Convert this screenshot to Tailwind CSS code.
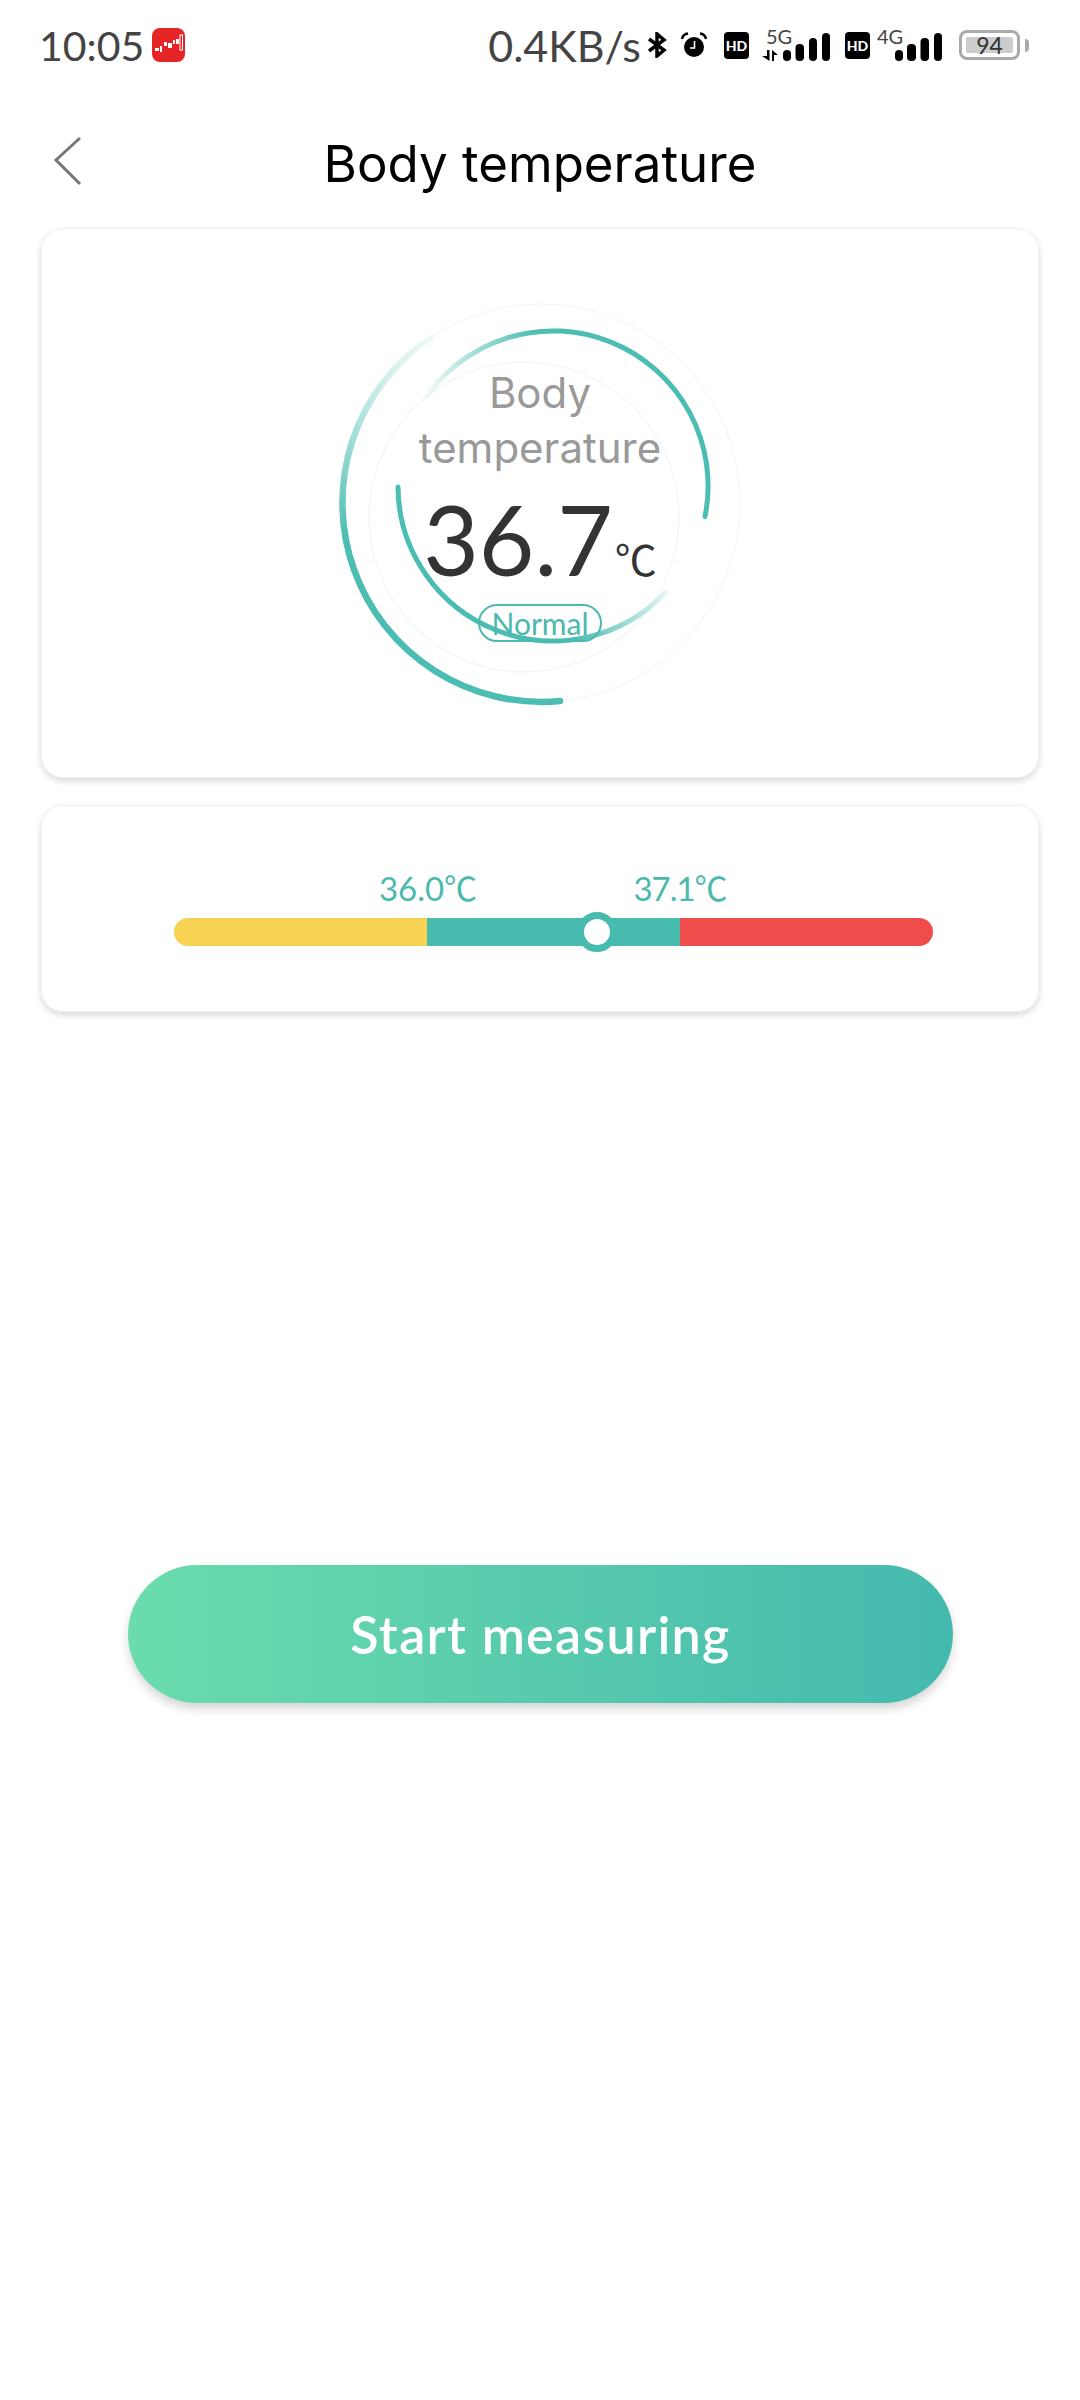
<!DOCTYPE html>
<html lang="en">
<head>
  <meta charset="UTF-8" />
  <meta name="viewport" content="width=device-width, initial-scale=1" />
  <title>Body temperature</title>
  <script src="https://cdn.jsdelivr.net/npm/@tailwindcss/browser@4"></script>
</head>
<body class="bg-white font-['Lato','Noto_Sans_CJK_SC',sans-serif]">
<div class="w-[1080px] h-[2400px] overflow-hidden">

  <!-- status bar -->
  <div class="h-[90px] flex items-center justify-between pl-[39px] pr-[51px] text-[#444]">
    <div class="flex items-center">
      <span class="text-[41px] leading-none w-[113px]">10:05</span>
      <svg class="w-[33px] h-[34px]" viewBox="0 0 33 34">
        <rect width="33" height="34" rx="8" fill="#e52525"/>
        <g fill="#fff">
          <rect x="3" y="20" width="4" height="3"/><rect x="8" y="18" width="2" height="6"/>
          <rect x="12" y="14" width="3" height="4"/><rect x="16" y="15" width="4" height="5"/>
          <rect x="21" y="12" width="2" height="4"/><rect x="24" y="11" width="3" height="5"/>
        </g>
        <rect x="28" y="7" width="2.500" height="15" fill="none" stroke="#fff" stroke-width="1"/>
      </svg>
    </div>
    <div class="flex items-center">
      <span class="text-[43px] leading-none">0.4KB/s</span>
      <svg class="ml-[6px] w-[20px] h-[26px]" viewBox="0 0 20 26" fill="none" stroke="#000" stroke-width="3.500">
        <path d="M2 7 L17 18 L10 24 V2 L17 8 L2 19"/>
      </svg>
      <svg class="ml-[14px] w-[26px] h-[26px]" viewBox="0 0 26 26">
        <circle cx="13" cy="15" r="10" fill="#000"/>
        <path d="M13.500 9v7H9" fill="none" stroke="#fff" stroke-width="1.600"/>
        <path d="M1 7Q2 2 7 1.500M25 7Q24 2 19 1.500" fill="none" stroke="#000" stroke-width="2.500"/>
      </svg>
      <div class="ml-[17px] w-[25px] h-[27px] rounded-[4px] bg-black text-white text-[14px] font-black leading-[27px] text-center">HD</div>
      <div class="ml-[13px] relative w-[68px] h-[34px]">
        <span class="absolute left-[4px] top-[-2px] text-[20px] leading-[20px]">5G</span>
        <svg class="absolute left-0 bottom-0 w-[68px] h-[34px]" viewBox="0 0 68 34">
          <path d="M5 22h2.500v11L0 28h5zM10 22l6 5h-4v6h-2z" fill="#000"/>
          <rect x="21" y="22" width="8" height="11" rx="4"/>
          <rect x="33.500" y="16" width="8.500" height="17" rx="4"/>
          <rect x="47" y="10" width="8" height="23" rx="4"/>
          <rect x="60" y="5" width="8" height="28" rx="4"/>
        </svg>
      </div>
      <div class="ml-[15px] w-[25px] h-[27px] rounded-[4px] bg-black text-white text-[14px] font-black leading-[27px] text-center">HD</div>
      <div class="ml-[7px] relative w-[65px] h-[34px]">
        <span class="absolute left-0 top-[-2px] text-[20px] leading-[20px]">4G</span>
        <svg class="absolute left-0 bottom-0 w-[65px] h-[34px]" viewBox="0 0 65 34">
          <rect x="18" y="22" width="8" height="11" rx="4"/>
          <rect x="30" y="16" width="9" height="17" rx="4"/>
          <rect x="43.500" y="10" width="8.500" height="23" rx="4"/>
          <rect x="57" y="5" width="8" height="28" rx="4"/>
        </svg>
      </div>
      <div class="ml-[17px] w-[61px] h-[30px] border-[3px] border-[#aaa] rounded-[8px] p-[4px]">
        <div class="h-full w-[47px] bg-[#ccc] rounded-[2px] text-[23px] leading-[16px] text-center text-[#333]">94</div>
      </div>
      <div class="ml-[5px] w-[4px] h-[13px] bg-[#aaa] rounded-r-full"></div>
    </div>
  </div>

  <!-- header -->
  <div class="relative h-[138px] pt-[8px] flex items-center justify-center">
    <svg class="absolute left-[52px] top-[44px] w-[32px] h-[52px]" viewBox="0 0 32 52" fill="none" stroke="#777" stroke-width="3">
      <path d="M28 4 L4 26 L28 50"/>
    </svg>
    <h1 class="font-['Inter',sans-serif] text-[51px] leading-none text-black">Body temperature</h1>
  </div>

  <!-- gauge card -->
  <div class="mx-[41px] w-[998px] h-[550px] border border-[#f1f1f1] rounded-[22px] shadow-[0_3px_6px_rgba(0,0,0,0.16)] pt-[34px]">
    <div class="relative w-[480px] h-[480px] ml-[258px] pt-[102px] flex flex-col items-center">
      <svg class="absolute inset-0 w-[480px] h-[480px]" viewBox="300 263 480 480" fill="none">
        <defs>
          <linearGradient id="outerFade" gradientUnits="userSpaceOnUse" x1="500" y1="703" x2="430" y2="325">
            <stop offset="0" stop-color="#4bbdb2"/>
            <stop offset="0.5" stop-color="#4bbdb2"/>
            <stop offset="1" stop-color="#4bbdb2" stop-opacity="0"/>
          </linearGradient>
          <linearGradient id="topFade" gradientUnits="userSpaceOnUse" x1="600" y1="350" x2="420" y2="400">
            <stop offset="0" stop-color="#4bbdb2"/>
            <stop offset="0.3" stop-color="#4bbdb2"/>
            <stop offset="1" stop-color="#4bbdb2" stop-opacity="0"/>
          </linearGradient>
          <linearGradient id="bottomFade" gradientUnits="userSpaceOnUse" x1="570" y1="625" x2="670" y2="590">
            <stop offset="0" stop-color="#4bbdb2"/>
            <stop offset="1" stop-color="#4bbdb2" stop-opacity="0.1"/>
          </linearGradient>
        </defs>
        <circle cx="541" cy="503" r="199" stroke="#f2f9f8" stroke-width="1.500"/>
        <circle cx="524" cy="517" r="155" stroke="#f0f8f7" stroke-width="1.500"/>
        <path d="M560 701 A199 199 0 0 1 430 338" stroke="url(#outerFade)" stroke-width="6.500" stroke-linecap="round"/>
        <path d="M705 516.600 A155 155 0 0 0 423 401.600" stroke="url(#topFade)" stroke-width="5" stroke-linecap="round"/>
        <path d="M398 487 A155 155 0 0 0 666 592" stroke="url(#bottomFade)" stroke-width="5" stroke-linecap="round"/>
      </svg>
      <div class="relative font-['Inter',sans-serif] text-[42px] leading-[55px] text-[#999] text-center">Body<br />temperature</div>
      <div class="relative mt-[16px] flex items-baseline gap-[2px] text-[#333] pr-[3px]">
        <span class="text-[96px] leading-[96px]">36.7</span>
        <span class="text-[42px] leading-none tracking-[-3px]">℃</span>
      </div>
      <div class="relative mt-[17px] w-[124px] h-[38px] border-2 border-[#4bb9ad] rounded-full text-[30px] leading-[34px] text-center text-[#4bb9ad]">Normal</div>
    </div>
  </div>

  <!-- range card -->
  <div class="mt-[27px] mx-[41px] w-[998px] h-[207px] border border-[#f1f1f1] rounded-[22px] shadow-[0_3px_6px_rgba(0,0,0,0.16)] pt-[62px] pl-[132px]">
    <div class="flex pl-[204px] mb-[10px] text-[33px] leading-[40px] text-[#4bb9ad] text-center">
      <span class="w-[100px]">36.0℃</span>
      <span class="ml-[152px] w-[100px] tracking-[-1px]">37.1℃</span>
    </div>
    <div class="relative w-[759px] h-[28px] flex">
      <div class="w-[253px] bg-[#f8d353] rounded-l-full"></div>
      <div class="w-[253px] bg-[#46bbae]"></div>
      <div class="w-[253px] bg-[#ee4d4c] rounded-r-full"></div>
      <div class="absolute left-[403px] top-[-6px] w-[40px] h-[40px] rounded-full bg-white border-[7px] border-[#46bbae]"></div>
    </div>
  </div>

  <!-- action -->
  <button class="block mt-[553px] ml-[128px] w-[825px] h-[138px] rounded-full bg-linear-to-r from-[#6bdcac] to-[#44b9ae] shadow-[0_6px_10px_rgba(0,0,0,0.16)] text-white text-[52px] font-semibold tracking-[1.300px]">Start measuring</button>
</div>
</body>
</html>
